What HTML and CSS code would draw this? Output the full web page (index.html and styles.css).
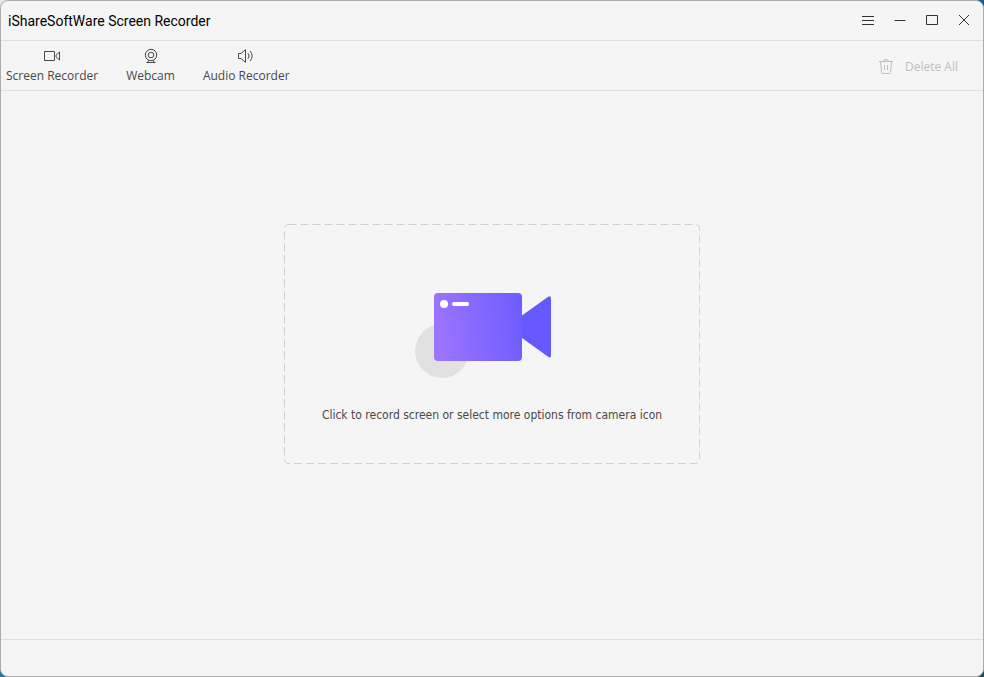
FILE: index.html
```html
<!DOCTYPE html>
<html lang="en">
<head>
    <meta charset="UTF-8">
    <meta name="viewport" content="width=device-width, initial-scale=1.0">
    <title>iShareSoftWare Screen Recorder</title>
    <link rel="stylesheet" href="styles.css">
</head>
<body>
    <div class="window">
        <header class="titlebar">
            <h1>iShareSoftWare Screen Recorder</h1>
            <div class="window-controls">
                <button type="button" aria-label="Menu">
                    <svg width="16" height="16" viewBox="0 0 16 16"><path d="M2 3.500h12M2 7.500h12M2 11.500h12"/></svg>
                </button>
                <button type="button" aria-label="Minimize">
                    <svg width="16" height="16" viewBox="0 0 16 16"><path d="M2.500 7.500h11"/></svg>
                </button>
                <button type="button" aria-label="Maximize">
                    <svg width="16" height="16" viewBox="0 0 16 16"><path d="M2.500 2.500h11v9h-11z"/></svg>
                </button>
                <button type="button" aria-label="Close">
                    <svg width="16" height="16" viewBox="0 0 16 16"><path d="M3 2l10 10M13 2L3 12"/></svg>
                </button>
            </div>
        </header>
        <nav class="toolbar">
            <button type="button" class="tool">
                <svg width="18" height="16" viewBox="0 0 18 16"><path d="M1.500 3.500h10v9h-10zM16.500 4v8l-3.500-3.200V7.200z"/></svg>
                Screen Recorder
            </button>
            <button type="button" class="tool">
                <svg width="18" height="16" viewBox="0 0 18 16"><circle cx="9" cy="7" r="5.700"/><circle cx="9" cy="7" r="2.800"/><path d="M6.800 12.200l-1 2.300M11.200 12.200l1 2.300M4.500 14.500h9"/></svg>
                Webcam
            </button>
            <button type="button" class="tool">
                <svg width="18" height="16" viewBox="0 0 18 16"><path d="M1.500 5.500h2.500l4.500-3.800v12.600l-4.500-3.800H1.500zM11 5.300q2 2.700 0 5.400M13.200 3q3.800 5 0 10"/></svg>
                Audio Recorder
            </button>
            <button type="button" class="delete-all" disabled>
                <svg width="16" height="16" viewBox="0 0 16 16"><path d="M1 2.500h14M5.500 2.500q0-2 2.500-2t2.500 2M2.500 3l1 10.500q0 1 1 1h7q1 0 1-1l1-10.500M6.500 6v5M9.500 6v5"/></svg>
                Delete All
            </button>
        </nav>
        <main class="content">
            <button type="button" class="record-area">
                <svg class="outline" width="100%" height="100%"><rect x="0.500" y="0.500" rx="4"/></svg>
                <svg class="camera" width="154" height="86" viewBox="0 0 154 86">
                    <defs>
                        <linearGradient id="cameraFill" gradientUnits="userSpaceOnUse" x1="24" y1="48" x2="126" y2="34">
                            <stop offset="0" stop-color="#9b74ff"/>
                            <stop offset="1" stop-color="#6658ff"/>
                        </linearGradient>
                    </defs>
                    <circle cx="27" cy="58" r="27" fill="#e1e1e1"/>
                    <rect x="19" y="0" width="88" height="68" rx="4" fill="url(#cameraFill)"/>
                    <path d="M107 22.500L132.800 4q3.200-2 3.200 1.500v57q0 3.500-3.200 1L107 45z" fill="#6658ff"/>
                    <circle cx="29" cy="11" r="4" fill="#fff"/>
                    <rect x="37" y="9" width="17" height="4" rx="2" fill="#fff"/>
                </svg>
                <span>Click to record screen or select more options from camera icon</span>
            </button>
        </main>
        <footer class="statusbar"></footer>
    </div>
</body>
</html>
```

FILE: styles.css
```css
* {
    box-sizing: border-box;
}
body {
    margin: 0;
    font-family: "DejaVu Sans Condensed", "Noto Sans", sans-serif;
    font-size: 12px;
    color: #484848;
    background: linear-gradient(to right, #e6e6e6 50%, #1d5a8e 50%) top / 100% 50% no-repeat, linear-gradient(to right, #28759b, #174d61);
}
.window {
    display: flex;
    flex-direction: column;
    min-height: 100vh;
    background-color: #f5f5f5;
    border: 1px solid #adadad;
    border-radius: 8px;
}
button {
    padding: 0;
    border: none;
    background: none;
    font: inherit;
    color: inherit;
}
svg {
    fill: none;
    stroke: currentColor;
}
.titlebar {
    display: flex;
    align-items: center;
    justify-content: space-between;
    height: 40px;
    padding: 0 7px;
    border-bottom: 1px solid #dfdfdf;
}
.titlebar h1 {
    margin: 0;
    font-family: Roboto, sans-serif;
    font-size: 14px;
    font-weight: normal;
    color: #000;
}
.window-controls {
    display: flex;
    gap: 8px;
    color: #333;
}
.window-controls button {
    display: flex;
    align-items: center;
    justify-content: center;
    width: 24px;
    height: 24px;
}
.toolbar {
    display: flex;
    align-items: center;
    gap: 28px;
    height: 50px;
    padding: 0 25px 0 5px;
    border-bottom: 1px solid #dfdfdf;
    font-family: "Open Sans", sans-serif;
}
.tool {
    display: flex;
    flex-direction: column;
    align-items: center;
    gap: 4px;
    line-height: 16px;
}
.delete-all {
    display: flex;
    align-items: center;
    gap: 11px;
    margin-left: auto;
    padding-top: 2px;
    color: #bebebe;
}
.content {
    display: flex;
    flex: 1;
    align-items: center;
    justify-content: center;
    padding-bottom: 43px;
}
.record-area {
    position: relative;
    display: flex;
    flex-direction: column;
    align-items: center;
    gap: 27px;
    padding: 69px 38px 40px;
    line-height: 18px;
}
.outline {
    position: absolute;
    top: 0;
    left: 0;
}
.outline rect {
    width: calc(100% - 1px);
    height: calc(100% - 1px);
    stroke: #cfcfcf;
    stroke-dasharray: 8 4;
}
.camera {
    stroke: none;
}
.statusbar {
    height: 37px;
    border-top: 1px solid #dfdfdf;
}
```
